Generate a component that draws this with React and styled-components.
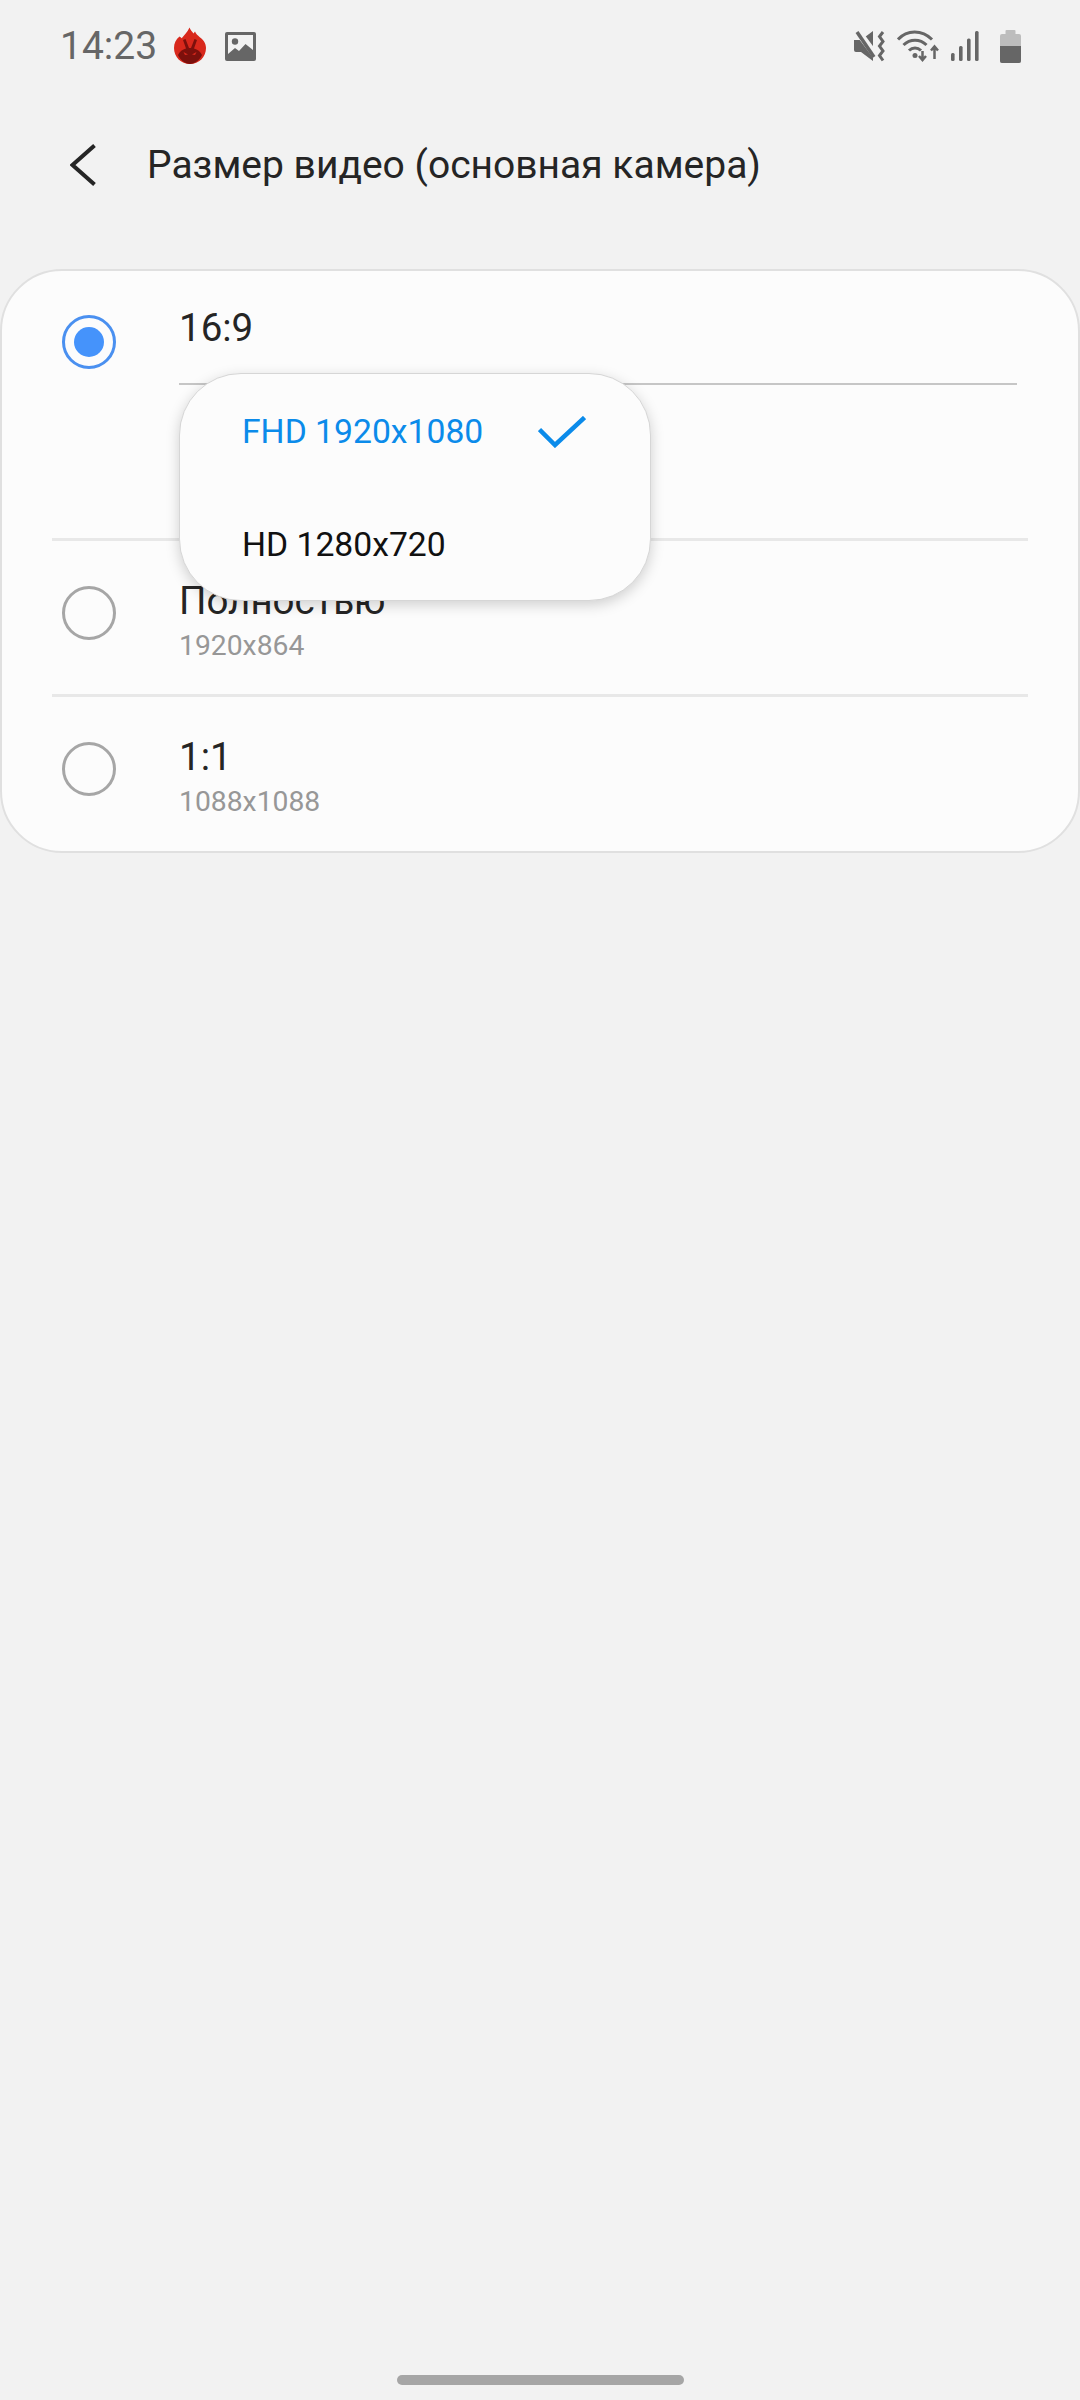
import React from "react";
import styled, { createGlobalStyle } from "styled-components";

const GlobalStyle = createGlobalStyle`
  html, body {
    margin: 0;
    padding: 0;
    background: #f2f2f2;
    font-family: Roboto, "Liberation Sans", sans-serif;
  }
`;

const Page = styled.div`
  display: flex;
  flex-direction: column;
  width: 1080px;
  height: 2400px;
  overflow: hidden;
  background: #f2f2f2;
`;

const StatusBar = styled.div`
  display: flex;
  align-items: center;
  justify-content: space-between;
  height: 92px;
  padding: 0 59px 0 60px;
`;

const StatusGroup = styled.div`
  display: flex;
  align-items: center;
`;

const Time = styled.span`
  font-size: 39px;
  color: #666;
  margin-right: 16px;
`;

const Icon = styled.svg`
  display: block;
  flex-shrink: 0;
  margin-left: ${(p) => p.$left || 0}px;
`;

const Header = styled.div`
  display: flex;
  align-items: center;
  height: 146px;
  padding-left: 70px;
`;

const Title = styled.h1`
  margin: 0 0 0 51px;
  font-size: 39px;
  font-weight: 400;
  color: #252525;
`;

const Card = styled.div`
  position: relative;
  box-sizing: border-box;
  height: 584px;
  margin-top: 31px;
  background: #fcfcfc;
  border: 2px solid #e0e0e0;
  border-radius: 62px;
`;

const Row = styled.div`
  display: flex;
  box-sizing: border-box;
  height: ${(p) => p.$height}px;
  padding: ${(p) => p.$top}px 61px 0 60px;
`;

const Radio = styled.div`
  box-sizing: border-box;
  flex-shrink: 0;
  display: flex;
  align-items: center;
  justify-content: center;
  width: 54px;
  height: 54px;
  border-radius: 50%;
  border: 3px solid ${(p) => (p.$on ? "#4a90f0" : "#a6a6a6")};
  background: transparent;
`;

const RadioDot = styled.div`
  width: 30px;
  height: 30px;
  border-radius: 50%;
  background: #4593fb;
`;

const RowText = styled.div`
  flex: 1;
  margin-left: 63px;
`;

const RowTitle = styled.div`
  font-size: 38.5px;
  line-height: 44px;
  color: #252525;
  margin-top: ${(p) => (p.$first ? -9 : -7)}px;
`;

const RowSub = styled.div`
  font-size: 28.3px;
  line-height: 34px;
  color: #979797;
  margin-top: 6px;
`;

const TitleLine = styled.div`
  height: 2px;
  margin-top: 33px;
  background: #c6c6c6;
`;

const Divider = styled.div`
  height: 3px;
  margin: 0 50px;
  background: #e8e8e8;
`;

const Popup = styled.div`
  position: absolute;
  top: 102px;
  left: 177px;
  box-sizing: border-box;
  width: 472px;
  height: 228px;
  padding-top: 1px;
  background: #fcfcfc;
  border: 1px solid #d6d6d6;
  border-radius: 62px;
  box-shadow: 0 4px 14px rgba(0, 0, 0, 0.18);
`;

const PopupItem = styled.div`
  display: flex;
  align-items: center;
  justify-content: space-between;
  height: 113px;
  padding: 0 64px 0 62px;
  font-size: 33.7px;
  color: ${(p) => (p.$on ? "#0b8bea" : "#111")};
`;

const HomeBar = styled.div`
  width: 287px;
  height: 10px;
  margin: auto auto 15px;
  border-radius: 5px;
  background: #a6a6a6;
`;

const AntutuIcon = () => (
  <Icon width="34" height="38" viewBox="0 0 34 38">
    <path
      d="M1 21C1 16 3 12.500 6.500 9.500c.8.500 1.500 1 2.200 1.800C11 8.500 14.500 5 16.500.5c1 2.500 2.500 4 4 6 .5-.7 1-1.200 1.500-2 1 2.500 3 4 4.500 5.500C30 12.500 33 16 33 21c0 9-7 16-16 16S1 30 1 21z"
      fill="#d8281c"
    />
    <path
      d="M5 28c1.500-3.500 4.500-5.500 8-6.500L10 13l2.500-1 3.500 9h2l3.500-9 2.500 1-3 8.500c3.500 1 6.500 3 8 6.500-2.500 5.500-7.500 9-12 9S7.500 33.500 5 28z"
      fill="#7c100c"
    />
    <path d="M10.500 25l4.500 2.500-3 .5zM23.500 25L19 27.500l3 .5z" fill="#d8281c" />
  </Icon>
);

const ImageIcon = () => (
  <Icon width="31" height="29" viewBox="0 0 31 29" $left={18}>
    <rect width="31" height="29" rx="2" fill="#666" />
    <rect x="3" y="3" width="25" height="23" fill="#f2f2f2" />
    <circle cx="10" cy="9.500" r="3.200" fill="#666" />
    <path d="M3 22l7-6 4 3 6.500-7 7.500 6v9H3z" fill="#666" />
  </Icon>
);

const MuteIcon = () => (
  <Icon width="32" height="32" viewBox="0 0 32 32">
    <path d="M0 10h7L19 1v30L7 22H2a2 2 0 0 1-2-2z" fill="#666" />
    <path d="M2 -1l20 27" stroke="#f2f2f2" strokeWidth="7" fill="none" />
    <path d="M3 2l17 25" stroke="#666" strokeWidth="3.500" fill="none" />
    <path d="M29 2l-3.500 4.500 3.500 5-3.500 4.500 3.500 5-3.500 4.500 3.500 5" stroke="#666" strokeWidth="3" fill="none" />
  </Icon>
);

const WifiIcon = () => (
  <Icon width="44" height="33" viewBox="0 0 44 33" $left={11}>
    <g fill="none" stroke="#666" strokeWidth="3">
      <path d="M1 9.500C10-.5 25-.5 35 9.500" />
      <path d="M6.500 15C13 8.500 23 8.500 29.500 15" />
      <path d="M12 20.500c3.500-3.500 8.500-3.500 12 0" />
    </g>
    <circle cx="18" cy="25.500" r="2.500" fill="#666" />
    <path d="M25.500 21v8M22 26l3.500 4 3.500-4" stroke="#666" strokeWidth="2.500" fill="none" />
    <path d="M37.500 29v-11M34 20.500l3.500-4 3.500 4" stroke="#666" strokeWidth="2.500" fill="none" />
  </Icon>
);

const SignalIcon = () => (
  <Icon width="28" height="30" viewBox="0 0 28 30" $left={10}>
    <rect x="0" y="22" width="3.600" height="8" rx="1.500" fill="#666" />
    <rect x="8" y="15" width="3.600" height="15" rx="1.500" fill="#666" />
    <rect x="16" y="7.500" width="3.600" height="22.500" rx="1.500" fill="#666" />
    <rect x="24" y="0" width="3.600" height="30" rx="1.500" fill="#666" />
  </Icon>
);

const BatteryIcon = () => (
  <Icon width="21" height="33" viewBox="0 0 21 33" $left={21}>
    <rect x="5.500" y="0" width="10" height="6" rx="1" fill="#bdbdbd" />
    <rect x="0" y="4" width="21" height="29" rx="2" fill="#bdbdbd" />
    <path d="M0 16h21v15a2 2 0 0 1-2 2H2a2 2 0 0 1-2-2z" fill="#666" />
  </Icon>
);

const BackIcon = () => (
  <Icon width="26" height="42" viewBox="0 0 26 42">
    <path d="M24.500 1.500L2.500 21l22 19.500" fill="none" stroke="#252525" strokeWidth="4" />
  </Icon>
);

const CheckIcon = () => (
  <Icon width="48" height="32" viewBox="0 0 48 32">
    <path d="M1.500 13.500L17 29 46.500 1.500" fill="none" stroke="#0b8bea" strokeWidth="4.500" />
  </Icon>
);

const App = () => {
  return (
    <Page>
      <GlobalStyle />
      <StatusBar>
        <StatusGroup>
          <Time>14:23</Time>
          <AntutuIcon />
          <ImageIcon />
        </StatusGroup>
        <StatusGroup>
          <MuteIcon />
          <WifiIcon />
          <SignalIcon />
          <BatteryIcon />
        </StatusGroup>
      </StatusBar>
      <Header>
        <BackIcon />
        <Title>Размер видео (основная камера)</Title>
      </Header>
      <Card>
        <Row $height={267} $top={44}>
          <Radio $on>
            <RadioDot />
          </Radio>
          <RowText>
            <RowTitle $first>16:9</RowTitle>
            <TitleLine />
          </RowText>
        </Row>
        <Divider />
        <Row $height={153} $top={45}>
          <Radio />
          <RowText>
            <RowTitle>Полностью</RowTitle>
            <RowSub>1920x864</RowSub>
          </RowText>
        </Row>
        <Divider />
        <Row $height={153} $top={45}>
          <Radio />
          <RowText>
            <RowTitle>1:1</RowTitle>
            <RowSub>1088x1088</RowSub>
          </RowText>
        </Row>
        <Popup>
          <PopupItem $on>
            FHD 1920x1080
            <CheckIcon />
          </PopupItem>
          <PopupItem>HD 1280x720</PopupItem>
        </Popup>
      </Card>
      <HomeBar />
    </Page>
  );
};

export default App;
